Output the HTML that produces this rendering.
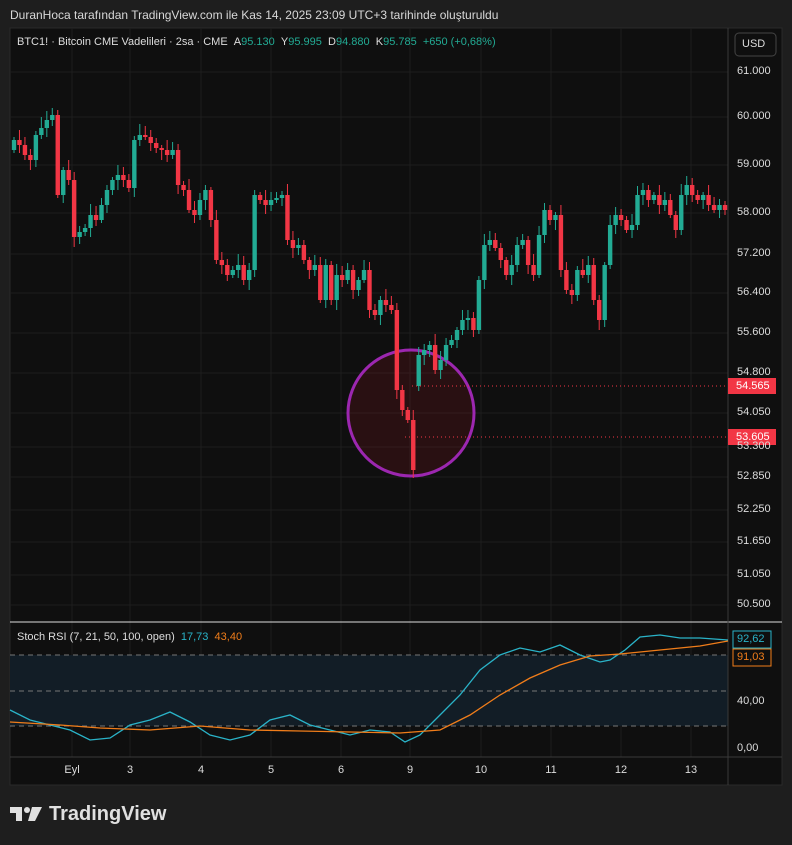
<!DOCTYPE html>
<html><head><meta charset="utf-8"><style>
body{margin:0;width:792px;height:845px;background:#1e1e1e;font-family:"Liberation Sans",sans-serif;overflow:hidden;position:relative}
.t{position:absolute;white-space:nowrap}
</style></head><body>
<div class="t" style="left:10px;top:8px;font-size:12px;color:#d8d8d8">DuranHoca tarafından TradingView.com ile Kas 14, 2025 23:09 UTC+3 tarihinde oluşturuldu</div>
<svg id="s" width="792" height="845" style="position:absolute;left:0;top:0">
<rect x="10" y="28" width="772" height="757" fill="#0f0f0f" stroke="#2a2a2a"/>
<g id="grid" stroke="#1e1e1e" stroke-width="1"></g>
<rect x="10" y="655" width="718" height="71" fill="#121d26"/>
<g stroke="#777" stroke-dasharray="5,4"><line x1="10" y1="655" x2="728" y2="655"/><line x1="10" y1="691" x2="728" y2="691"/><line x1="10" y1="726" x2="728" y2="726"/></g>
<circle cx="411" cy="413" r="63" fill="rgba(110,20,30,0.28)" stroke="#9c27b0" stroke-width="3"/>
<g id="c"></g>
<g stroke="#f23645" stroke-dasharray="1,3"><line x1="412" y1="386" x2="728" y2="386"/><line x1="405" y1="437" x2="728" y2="437"/></g>
<line x1="10" y1="622" x2="782" y2="622" stroke="#ddd"/>
<line x1="728" y1="28" x2="728" y2="785" stroke="#3a3a3a"/>
<line x1="10" y1="757" x2="782" y2="757" stroke="#3a3a3a"/>
<polyline fill="none" stroke="#2ab3c8" stroke-width="1.3" points="10,710 30,720 50,725 70,730 90,740 110,738 130,725 150,720 170,712 190,722 210,735 230,740 250,735 270,720 290,715 310,725 330,730 350,735 370,730 390,732 405,742 420,735 440,715 460,695 480,670 500,655 520,648 540,652 560,645 580,655 600,662 610,660 625,650 640,637 660,635 680,638 700,638 728,640"/>
<polyline fill="none" stroke="#f07d1a" stroke-width="1.3" points="10,722 60,725 100,728 150,730 200,726 250,730 300,731 350,732 400,733 440,730 470,715 500,695 530,678 560,665 590,656 620,654 660,650 700,646 728,641"/>
<rect x="733" y="631" width="38" height="17" fill="#0f0f0f" stroke="#2ab3c8"/>
<rect x="733" y="649" width="38" height="17" fill="#0f0f0f" stroke="#f07d1a"/>
<rect x="728" y="378" width="48" height="16" fill="#f23645"/>
<rect x="728" y="429" width="48" height="16" fill="#f23645"/>
<rect x="735" y="33" width="41" height="23" rx="4" fill="#0f0f0f" stroke="#444"/>
</svg>
<div class="t" style="left:17px;top:36px;font-size:11px;color:#ddd">BTC1! · Bitcoin CME Vadelileri · 2sa · CME &nbsp;A<span style="color:#22ab94">95.130</span> &nbsp;Y<span style="color:#22ab94">95.995</span> &nbsp;D<span style="color:#22ab94">94.880</span> &nbsp;K<span style="color:#22ab94">95.785 &nbsp;+650 (+0,68%)</span></div>
<div class="t" style="left:742px;top:38px;font-size:11px;color:#ddd">USD</div>
<div id="pl"></div>
<div class="t" style="left:736px;top:380px;font-size:11px;color:#fff">54.565</div>
<div class="t" style="left:736px;top:431px;font-size:11px;color:#fff">53.605</div>
<div class="t" style="left:737px;top:633px;font-size:11px;color:#2ab3c8">92,62</div>
<div class="t" style="left:737px;top:651px;font-size:11px;color:#f07d1a">91,03</div>
<div class="t" style="left:737px;top:695px;font-size:11px;color:#ddd">40,00</div>
<div class="t" style="left:737px;top:742px;font-size:11px;color:#ddd">0,00</div>
<div class="t" style="left:17px;top:631px;font-size:11px;color:#ddd">Stoch RSI (7, 21, 50, 100, open) &nbsp;<span style="color:#2ab3c8">17,73</span> &nbsp;<span style="color:#f07d1a">43,40</span></div>
<div id="dl"></div>
<div class="t" style="left:10px;top:803px;height:22px;display:flex;align-items:center">
<svg width="34" height="18" viewBox="0 0 34 18"><path d="M0 2h12v14h-6v-8h-6z" fill="#e0e0e0"/><circle cx="17" cy="5" r="3" fill="#e0e0e0"/><path d="M22 2h10l-7 14h-7z" fill="#e0e0e0"/></svg>
<span style="font-size:20px;font-weight:bold;color:#e0e0e0;margin-left:5px">TradingView</span></div>
<script>
var ns="http://www.w3.org/2000/svg";
function el(p,t,a){var e=document.createElementNS(ns,t);for(var k in a)e.setAttribute(k,a[k]);p.appendChild(e);return e}
var g=document.getElementById('grid');
var P=[["61.000",72],["60.000",117],["59.000",165],["58.000",213],["57.200",254],["56.400",293],["55.600",333],["54.800",373],["54.050",413],["53.300",447],["52.850",477],["52.250",510],["51.650",542],["51.050",575],["50.500",605]];
var pl="";
P.forEach(function(p){el(g,'line',{x1:10,x2:728,y1:p[1],y2:p[1]});pl+='<div class="t" style="left:737px;top:'+(p[1]-7)+'px;font-size:11px;color:#ddd">'+p[0]+'</div>';});
document.getElementById('pl').innerHTML=pl;
var D=[["Eyl",72],["3",130],["4",201],["5",271],["6",341],["9",410],["10",481],["11",551],["12",621],["13",691]],dl="";
D.forEach(function(d){el(g,'line',{x1:d[1],x2:d[1],y1:28,y2:757});dl+='<div class="t" style="left:'+(d[1]-15)+'px;width:30px;text-align:center;top:764px;font-size:11px;color:#ddd">'+d[0]+'</div>';});
document.getElementById('dl').innerHTML=dl;
var C=[140,145,155,160,135,128,120,115,195,170,180,237,232,228,215,220,205,190,180,175,180,188,140,135,137,143,148,150,155,150,185,190,210,215,200,190,220,260,265,275,270,265,280,270,195,200,205,200,198,195,240,248,245,260,270,265,300,265,300,275,280,270,290,280,270,310,315,300,305,310,390,410,420,470,355,350,345,370,360,345,340,330,320,318,330,280,245,240,248,260,275,265,245,240,265,275,235,210,220,215,270,290,295,270,275,265,300,320,265,225,215,220,230,225,195,190,200,195,205,200,215,230,195,185,195,200,195,205,210,205,210];
var OV={74:386};
var cg=document.getElementById('c'),n=C.length,st=(725-14)/(n-1),prev=150;
for(var i=0;i<n;i++){var x=14+i*st,o=(OV[i]!==undefined)?OV[i]:prev,c=C[i],up=c<o,col=up?'#22ab94':'#f23645';
var hi=Math.min(o,c)-3-(i*7%9),lo=Math.max(o,c)+3+(i*5%8);
el(cg,'line',{x1:x,x2:x,y1:hi,y2:lo,stroke:col,'stroke-width':1});
el(cg,'rect',{x:x-2.2,y:Math.min(o,c),width:4.4,height:Math.max(1,Math.abs(o-c)),fill:col});prev=c;}
</script>
</body></html>
